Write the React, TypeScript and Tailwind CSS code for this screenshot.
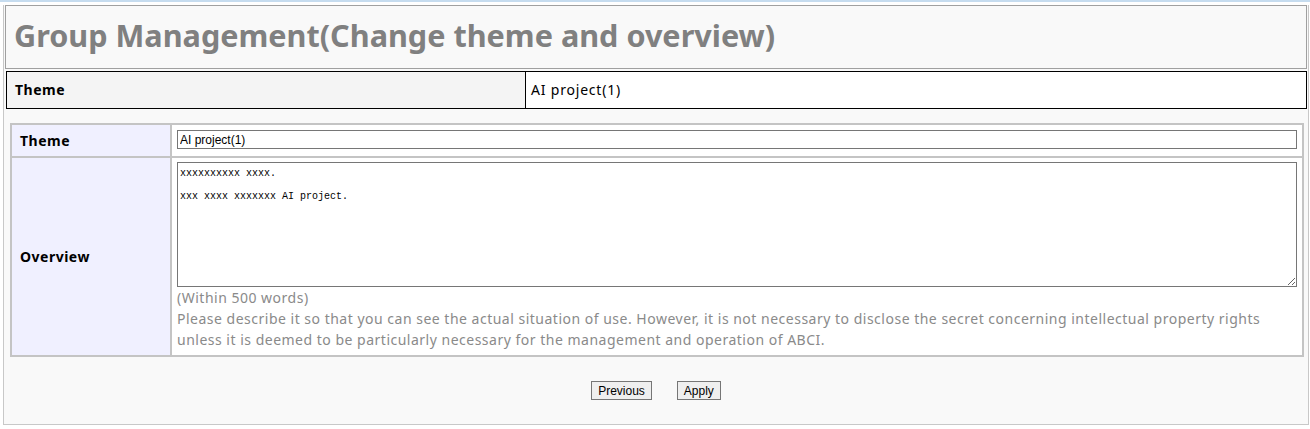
import React from 'react';

const bodyFont = { fontFamily: '"Noto Sans", "DejaVu Sans", sans-serif' };

export default function App() {
  return (
    <div className="min-h-screen bg-white" style={bodyFont}>
      <div className="h-[2px] bg-[#c6dcef]" />
      <div className="ml-[3px] mr-[1px] border-x border-b border-[#c8c8c8] bg-[#f9f9f9] pb-[24px]">
        {/* page title */}
        <div className="ml-[1px] mr-[1px] mt-[3px] flex h-[64px] items-center border border-[#a0a0a0] bg-[#f9f9f9] pb-[4px] pl-[8px]">
          <h1 className="text-[30.6px] font-bold leading-none text-[#808080]">
            Group Management(Change theme and overview)
          </h1>
        </div>

        {/* current theme */}
        <div className="ml-[2px] mr-[1px] mt-[2px] flex h-[38px] border border-black bg-white text-[14px] leading-[20px] text-black">
          <div className="flex w-[519px] items-center border-r border-black bg-[#f4f4f4] pb-[1px] pl-[8px] font-bold tracking-[0.5px]">
            Theme
          </div>
          <div className="flex flex-1 items-center pb-[1px] pl-[5px] tracking-[0.8px]">AI project(1)</div>
        </div>

        {/* edit form */}
        <div className="ml-[6px] mr-[4px] mt-[14px] border-2 border-[#c4c4c4] bg-white text-[14px]">
          <div className="flex border-b-2 border-[#c4c4c4]">
            <div className="flex w-[160px] shrink-0 items-center border-r-2 border-[#c4c4c4] bg-[#f0f0ff] pb-[1px] pl-[8px] font-bold tracking-[0.5px] text-black">
              Theme
            </div>
            <div className="flex-1 px-[5px] pb-[7px] pt-[5px]">
              <input
                type="text"
                defaultValue="AI project(1)"
                className="block h-[19px] w-full border border-[#767676] bg-white px-[2px] text-[12px] text-black outline-none"
                style={{ fontFamily: '"Liberation Sans", Arial, sans-serif' }}
              />
            </div>
          </div>
          <div className="flex">
            <div className="flex w-[160px] shrink-0 items-center border-r-2 border-[#c4c4c4] bg-[#f0f0ff] pl-[8px] font-bold tracking-[0.5px] text-black">
              Overview
            </div>
            <div className="flex-1 px-[5px] pb-[5px] pt-[4px]">
              <textarea
                spellCheck={false}
                defaultValue={'xxxxxxxxxx xxxx.\n\nxxx xxxx xxxxxxx AI project.'}
                className="block h-[125px] w-full resize-y border border-[#767676] bg-white px-[2px] pt-[5px] text-[10px] leading-[11.5px] text-black outline-none"
                style={{ fontFamily: '"Liberation Mono", "DejaVu Sans Mono", monospace' }}
              />
              <div className="text-[14px] leading-[21px] tracking-[0.5px] text-[#8a8a8a]">
                <div>(Within 500 words)</div>
                <div>
                  Please describe it so that you can see the actual situation of use. However, it is not necessary to
                  disclose the secret concerning intellectual property rights unless it is deemed to be particularly
                  necessary for the management and operation of ABCI.
                </div>
              </div>
            </div>
          </div>
        </div>

        {/* actions */}
        <div
          className="mt-[24px] flex justify-center gap-[25px] text-[12px] text-black"
          style={{ fontFamily: '"Liberation Sans", Arial, sans-serif' }}
        >
          <button className="h-[19px] border border-[#767676] bg-[#efefef] px-[6px] leading-none">Previous</button>
          <button className="h-[19px] border border-[#767676] bg-[#efefef] px-[6px] leading-none">Apply</button>
        </div>
      </div>
    </div>
  );
}
